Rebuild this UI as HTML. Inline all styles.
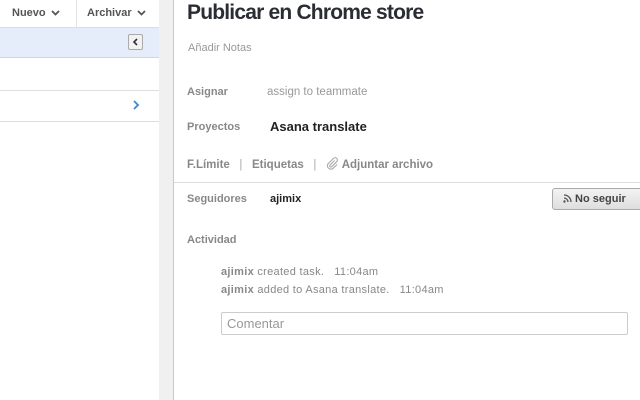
<!DOCTYPE html>
<html><head><meta charset="utf-8"><style>
*{margin:0;padding:0;box-sizing:border-box}
body{width:640px;height:400px;overflow:hidden;background:#fff;font-family:"Liberation Sans",sans-serif;position:relative}
.a{position:absolute;white-space:nowrap}
.lbl{color:#888;font-size:11px;font-weight:bold}
</style></head><body>
<div class="a" style="left:0;top:0;width:159px;height:400px;background:#fff"></div>
<div class="a" style="left:159px;top:0;width:14px;height:400px;background:#f0f0f0"></div>
<div class="a" style="left:173px;top:0;width:1px;height:400px;background:#c8c8c8"></div>
<div class="a" style="left:0;top:0;width:159px;height:28px;border-bottom:1px solid #ddd"></div>
<div class="a" style="left:12px;top:7px;font-size:11px;font-weight:bold;color:#555">Nuevo <svg width="9" height="6" viewBox="0 0 9 6" style="margin-left:2px"><path d="M1 1l3.5 3.5L8 1" stroke="#555" stroke-width="1.8" fill="none"/></svg></div>
<div class="a" style="left:76px;top:0;width:1px;height:28px;background:#e2e2e2"></div>
<div class="a" style="left:87px;top:7px;font-size:11px;font-weight:bold;color:#555">Archivar <svg width="9" height="6" viewBox="0 0 9 6" style="margin-left:2px"><path d="M1 1l3.5 3.5L8 1" stroke="#555" stroke-width="1.8" fill="none"/></svg></div>
<div class="a" style="left:0;top:28px;width:159px;height:30px;background:#e4edf9;border-bottom:1px solid #cfd8e2"></div>
<div class="a" style="left:128px;top:34px;width:15px;height:16px;border:1px solid #aaa;border-radius:2px;background:#f2f2f2"><svg width="13" height="14" viewBox="0 0 13 14"><path d="M8 4l-3 3 3 3" stroke="#333" stroke-width="1.6" fill="none"/></svg></div>
<div class="a" style="left:0;top:90px;width:159px;height:1px;background:#ddd"></div>
<svg class="a" style="left:132px;top:100px" width="8" height="10" viewBox="0 0 8 10"><path d="M2 1l4 4-4 4" stroke="#3a8ad0" stroke-width="1.8" fill="none"/></svg>
<div class="a" style="left:0;top:121px;width:159px;height:1px;background:#ddd"></div>
<div class="a" style="left:187px;top:1px;font-size:21px;font-weight:bold;color:#2a2d33;letter-spacing:-0.8px">Publicar en Chrome store</div>
<div class="a" style="left:188px;top:42px;font-size:11px;color:#999">Añadir Notas</div>
<div class="a lbl" style="left:187px;top:86px">Asignar</div>
<div class="a" style="left:267px;top:86px;font-size:11.5px;color:#999">assign to teammate</div>
<div class="a lbl" style="left:187px;top:121px">Proyectos</div>
<div class="a" style="left:270px;top:119px;font-size:13px;font-weight:bold;color:#222">Asana translate</div>
<div class="a lbl" style="left:187px;top:157px;font-size:11.5px">F.Límite &nbsp;&nbsp;<span style="font-weight:normal;color:#aaa">|</span>&nbsp;&nbsp; Etiquetas &nbsp;&nbsp;<span style="font-weight:normal;color:#aaa">|</span>&nbsp;&nbsp; <svg width="13" height="13" viewBox="0 0 13 13" style="vertical-align:-2px"><path d="M8.5 3.5L4 8a1.2 1.2 0 0 0 1.7 1.7l5-5a2.3 2.3 0 0 0-3.3-3.3L2.3 6.5a3.4 3.4 0 0 0 4.8 4.8L11 7.5" stroke="#aaa" stroke-width="1.1" fill="none"/></svg> Adjuntar archivo</div>
<div class="a" style="left:174px;top:182px;width:466px;height:1px;background:#ddd"></div>
<div class="a lbl" style="left:187px;top:193px">Seguidores</div>
<div class="a" style="left:270px;top:193px;font-size:11px;font-weight:bold;color:#222">ajimix</div>
<div class="a" style="left:552px;top:188px;width:92px;height:22px;border:1px solid #aaa;border-radius:3px;background:linear-gradient(#f3f3f3,#dedede);font-size:11px;font-weight:bold;color:#444;padding:4px 0 0 10px"><svg width="9" height="9" viewBox="0 0 9 9" style="vertical-align:-1px"><circle cx="1.5" cy="7.5" r="1.2" fill="#555"/><path d="M1 4a4 4 0 0 1 4 4M1 1a7 7 0 0 1 7 7" stroke="#555" stroke-width="1.3" fill="none"/></svg> No seguir</div>
<div class="a lbl" style="left:187px;top:234px">Actividad</div>
<div class="a" style="left:221px;top:266px;font-size:11px;color:#888;letter-spacing:0.3px"><b>ajimix</b> created task. &nbsp;&nbsp;11:04am</div>
<div class="a" style="left:221px;top:284px;font-size:11px;color:#888;letter-spacing:0.3px"><b>ajimix</b> added to Asana translate. &nbsp;&nbsp;11:04am</div>
<div class="a" style="left:221px;top:312px;width:407px;height:23px;border:1px solid #ccc;border-radius:2px;font-size:13px;color:#999;padding:3px 0 0 5px">Comentar</div>
</body></html>
